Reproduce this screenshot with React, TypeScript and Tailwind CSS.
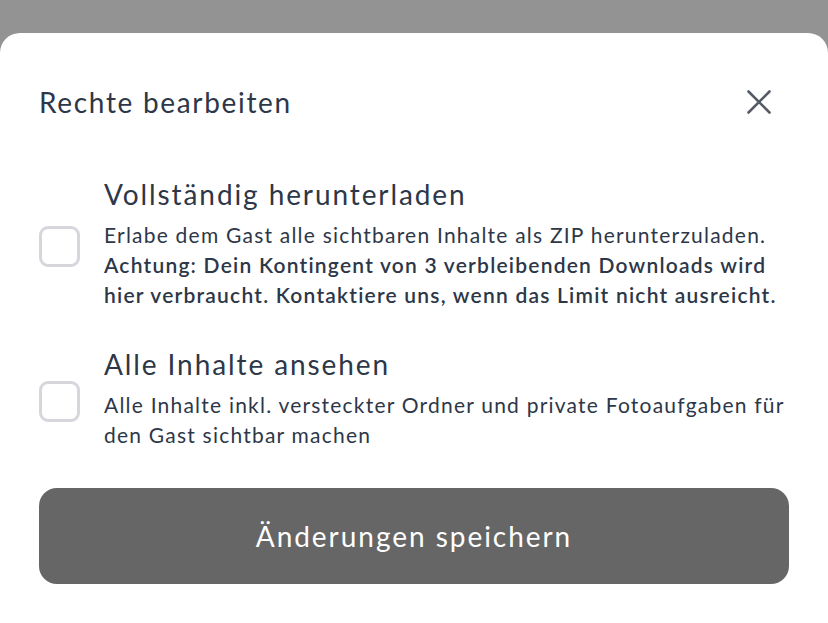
import React from 'react'

function CheckBox() {
  return (
    <span className="mt-[6px] block h-[41px] w-[41px] shrink-0 rounded-[9px] border-[3px] border-[#d5d7dc] bg-white" />
  )
}

function Option({ title, children }: { title: string; children: React.ReactNode }) {
  return (
    <label className="flex items-center gap-[24px]">
      <CheckBox />
      <div className="flex flex-col gap-[8px]">
        <div className="text-[28px] leading-[36px] tracking-[0.068em]">{title}</div>
        <div className="text-[21px] leading-[30px] tracking-[0.058em]">{children}</div>
      </div>
    </label>
  )
}

export default function App() {
  return (
    <div
      className="flex min-h-[623px] w-full flex-col bg-[#939393] text-[#2d3748]"
      style={{ fontFamily: 'Lato, "Noto Sans", sans-serif' }}
    >
      <div className="h-[33px]" />
      <div className="flex flex-1 flex-col rounded-t-[20px] bg-white px-[39px] pt-[51px]">
        {/* Header */}
        <div className="flex items-center justify-between">
          <h2 className="text-[28px] leading-[36px] tracking-[0.06em]">Rechte bearbeiten</h2>
          <button className="mr-[18px] text-[#555b66]" aria-label="Schließen">
            <svg width="24" height="24" viewBox="0 0 24 24" fill="none" stroke="currentColor" strokeWidth="2.6" strokeLinecap="round">
              <path d="M1.5 1.5L22.5 22.5M22.5 1.5L1.5 22.5" />
            </svg>
          </button>
        </div>

        <div className="mt-[56px] flex flex-col gap-[36px]">
          <Option title="Vollständig herunterladen">
            Erlabe dem Gast alle sichtbaren Inhalte als ZIP herunterzuladen.
            <br />
            <span className="font-semibold">
              Achtung: Dein Kontingent von 3 verbleibenden Downloads wird hier verbraucht. Kontaktiere uns, wenn das
              Limit nicht ausreicht.
            </span>
          </Option>
          <Option title="Alle Inhalte ansehen">
            Alle Inhalte inkl. versteckter Ordner und private Fotoaufgaben für den Gast sichtbar machen
          </Option>
        </div>

        <button className="mt-[38px] flex h-[96px] w-full items-center justify-center rounded-[18px] bg-[#666666] text-[28px] tracking-[0.07em] text-white">
          Änderungen speichern
        </button>
      </div>
    </div>
  )
}
